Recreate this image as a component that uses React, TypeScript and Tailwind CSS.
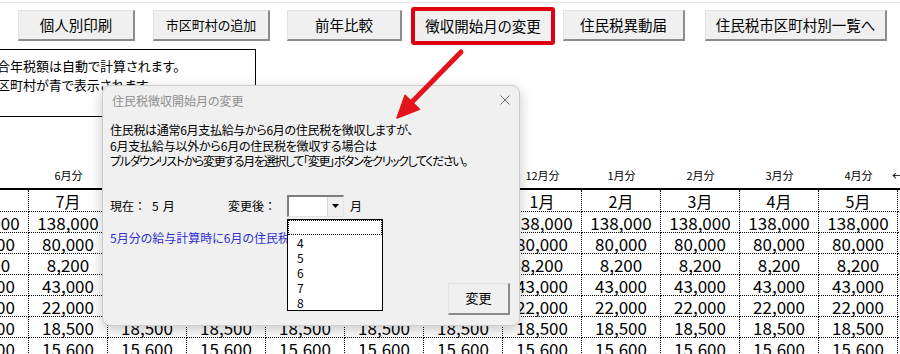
const labels = ['', '6月分', '7月分', '8月分', '9月分', '10月分', '11月分', '12月分', '1月分', '2月分', '3月分', '4月分', '']
const months = ['', '7月', '8月', '9月', '10月', '11月', '12月', '1月', '2月', '3月', '4月', '5月', '']
const amounts = ['138,000', '80,000', '8,200', '43,000', '22,000', '18,500', '15,600']
const choices = ['', '4', '5', '6', '7', '8']

function SheetButton({ label, className = '' }: { label: string; className?: string }) {
  return (
    <div
      className={`flex h-[31px] shrink-0 items-center justify-center border-t border-l border-t-[#e2e2e2] border-l-[#e2e2e2] border-r-2 border-b-2 border-r-[#8c8c8c] border-b-[#8c8c8c] bg-[#f0f0f0] ${className}`}
    >
      {label}
    </div>
  )
}

function ChangeDialog() {
  return (
    <div className="absolute left-[102px] top-[85px] h-[241px] w-[418px] rounded-[8px] border border-[#cdcdcd] bg-[#f0f0f0] text-[12px] shadow-[0_4px_14px_rgba(0,0,0,0.22)]">
      {/* Title bar */}
      <div className="flex h-[29px] items-center pl-[9px] text-[#8e8e8e]">住民税徴収開始月の変更</div>
      <svg className="absolute right-[9px] top-[9px]" width="10" height="10" viewBox="0 0 10 10">
        <path d="M0.5 0.5L9.5 9.5M9.5 0.5L0.5 9.5" stroke="#6b6b6b" strokeWidth="1" />
      </svg>

      {/* Message */}
      <div className="mt-[7px] pl-[7px] leading-[15.5px] whitespace-nowrap">
        <div className="tracking-[-0.3px]">住民税は通常6月支払給与から6月の住民税を徴収しますが、</div>
        <div className="tracking-[-0.2px]">6月支払給与以外から6月の住民税を徴収する場合は</div>
        <div className="tracking-[-1.35px]">プルダウンリストから変更する月を選択して「変更」ボタンをクリックしてください。</div>
      </div>

      {/* Month select row */}
      <div className="mt-[26px] flex h-[22px] items-center pl-[7px] [font-feature-settings:normal]">
        <span className="flex w-[118px]">
          <span>現在：</span>
          <span className="ml-[6px]">5</span>
          <span className="ml-[4px]">月</span>
        </span>
        <span className="w-[59px]">変更後：</span>
        <div className="flex h-[22px] w-[57px] border-t-2 border-l-2 border-t-[#7d7d7d] border-l-[#7d7d7d] border-b border-r border-b-[#e4e4e4] border-r-[#e4e4e4] bg-white">
          <div className="flex-1" />
          <div className="flex w-[16px] items-center justify-center border-l border-[#d6d6d6] bg-[#f0f0f0]">
            <svg width="7" height="4" viewBox="0 0 7 4">
              <path d="M0 0H7L3.5 4Z" fill="#000" />
            </svg>
          </div>
        </div>
        <span className="ml-[6px]">月</span>
      </div>

      <div className="mt-[13px] ml-[7px] w-[177px] overflow-hidden leading-[15px] whitespace-nowrap text-[#2f2fd2]">
        5月分の給与計算時に6月の住民税を徴収します
      </div>

      <div className="mt-[38px] flex justify-end pr-[9px]">
        <SheetButton label="変更" className="h-[32px] w-[62px] text-[13px]" />
      </div>

      {/* Open dropdown list */}
      <div className="absolute left-[184px] top-[133px] w-[96px] border border-black bg-white">
        {choices.map((c, i) => (
          <div
            key={i}
            className={`flex h-[15px] items-center pl-[9px] leading-none ${i === 0 ? 'border border-dotted border-black' : ''}`}
          >
            {c}
          </div>
        ))}
      </div>
    </div>
  )
}

export default function App() {
  return (
    <div className="relative h-[354px] w-[900px] overflow-hidden bg-white font-['Noto_Sans_CJK_JP','Noto_Sans',sans-serif] text-black [font-feature-settings:'palt']">
      <div className="mt-[2px] h-px bg-[#e4e4e4]" />

      {/* Toolbar buttons */}
      <div className="mt-[7px] flex h-[31px] items-center">
        <SheetButton label="個人別印刷" className="ml-[18px] w-[117px] text-[14.5px]" />
        <SheetButton label="市区町村の追加" className="ml-[18px] w-[117px] text-[13px]" />
        <SheetButton label="前年比較" className="ml-[17px] w-[115px] text-[14.5px]" />
        <div className="ml-[9px] flex h-[38px] w-[144px] shrink-0 items-center justify-center rounded-[3px] border-4 border-[#e0000f] bg-[#f0f0f0] text-[14.5px]">
          徴収開始月の変更
        </div>
        <SheetButton label="住民税異動届" className="ml-[8px] w-[122px] text-[14.5px]" />
        <SheetButton label="住民税市区町村別一覧へ" className="ml-[20px] w-[182px] text-[14.5px]" />
      </div>

      {/* Note box */}
      <div className="ml-[-2px] mt-[8px] h-[68px] w-[258px] overflow-hidden border border-black pt-[6px] text-[13px] leading-[19px] whitespace-nowrap">
        <div className="ml-[-2px]">合年税額は自動で計算されます。</div>
        <div className="ml-[-2px]">区町村が青で表示されます。</div>
      </div>

      {/* Sheet grid */}
      <div className="ml-[-50px] mt-[46px] w-[1027px]">
        <div className="grid h-[27px] grid-cols-[repeat(13,79px)] border-b-2 border-black text-[11px]">
          {labels.map((l, i) => (
            <div key={i} className="flex items-center justify-center">
              {i === 12 ? <span className="mr-auto ml-[-6px] text-[12px]">←</span> : l}
            </div>
          ))}
        </div>
        <div className="grid grid-cols-[repeat(13,79px)] text-[16px]">
          {months.map((m, i) => (
            <div key={i} className="flex h-[22px] items-center justify-center border-r border-b border-dotted border-black">
              {m}
            </div>
          ))}
        </div>
        {amounts.map((a) => (
          <div key={a} className="grid grid-cols-[repeat(13,79px)] text-[17px]">
            {months.map((_, i) => (
              <div key={i} className="flex h-[21px] items-center justify-center border-r border-b border-dotted border-black leading-none">
                {a}
              </div>
            ))}
          </div>
        ))}
      </div>

      <ChangeDialog />

      {/* Red pointer arrow */}
      <svg className="absolute left-[385px] top-[45px]" width="85" height="80" viewBox="385 45 85 80">
        <line x1="461" y1="52" x2="410" y2="104" stroke="#e3121b" strokeWidth="5" strokeLinecap="round" />
        <polygon points="397,118 419.5,109.2 405.1,95.2" fill="#e3121b" stroke="#e3121b" strokeWidth="1.5" strokeLinejoin="round" />
      </svg>
    </div>
  )
}
